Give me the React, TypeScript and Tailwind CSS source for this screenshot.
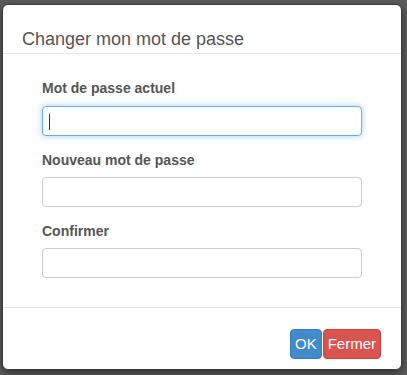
export default function App() {
  const fields = ['Mot de passe actuel', 'Nouveau mot de passe', 'Confirmer'];

  return (
    <div className="h-[375px] w-[407px] overflow-hidden bg-[#5c5c5c] pl-[2px] pt-[4px] font-['Liberation_Sans',Arial,sans-serif]">
      {/* Modal */}
      <div className="w-[400px] h-[366px] flex flex-col rounded-[6px] border border-[#3a3a3a] bg-white shadow-[0_3px_9px_rgba(0,0,0,0.5)]">
        {/* Header */}
        <div className="h-[49px] shrink-0 border-b border-[#e5e5e5] pl-[19px] pt-[24px]">
          <h4 className="text-[18px] leading-[20px] text-[#555]">Changer mon mot de passe</h4>
        </div>

        {/* Body */}
        <div className="flex-1 px-[39px] pt-[24px]">
          {fields.map((label, i) => (
            <div key={label} className={i === 0 ? '' : 'mt-[14px]'}>
              <label className="block text-[14px] leading-[20px] font-bold text-[#555]">{label}</label>
              {i === 0 ? (
                <div className="relative mt-[8px] h-[30px] w-[320px] rounded-[4px] border border-[#66afe9] bg-white shadow-[0_0_6px_rgba(102,175,233,0.6)]">
                  <span className="absolute left-[6px] top-[7px] h-[16px] w-px bg-[#333]" />
                </div>
              ) : (
                <div className="mt-[7px] h-[30px] w-[320px] rounded-[4px] border border-[#ccc] bg-white" />
              )}
            </div>
          ))}
        </div>

        {/* Footer */}
        <div className="h-[62px] shrink-0 border-t border-[#e5e5e5] flex items-start justify-end pr-[20px] pt-[21px]">
          <button className="h-[30px] px-[4px] rounded-[4px] border border-[#357ebd] bg-[#428bca] text-[15px] text-white">OK</button>
          <button className="ml-px h-[30px] px-[4px] rounded-[4px] border border-[#d43f3a] bg-[#d9534f] text-[15px] text-white">Fermer</button>
        </div>
      </div>
    </div>
  );
}
